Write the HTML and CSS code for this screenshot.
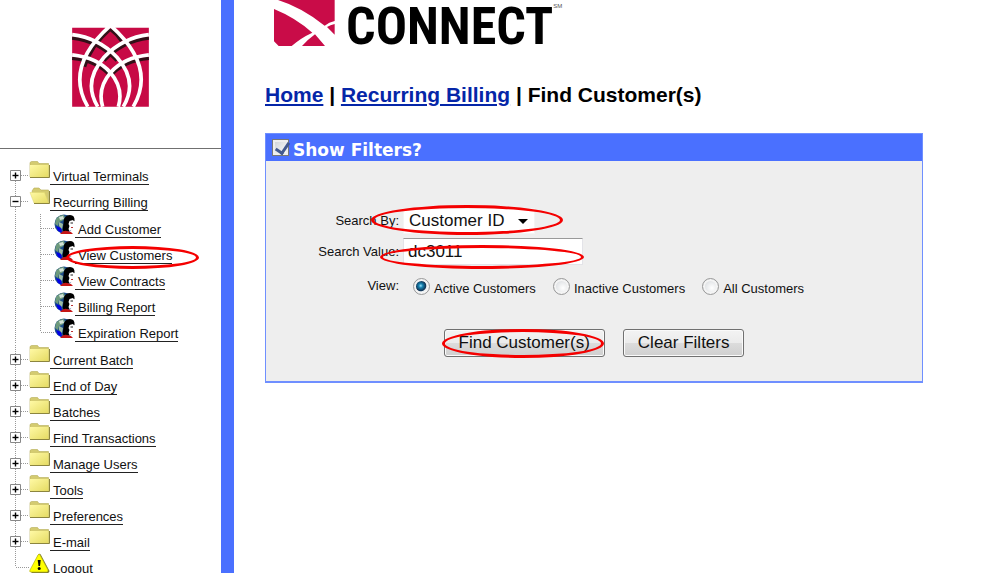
FILE: index.html
```
<!DOCTYPE html>
<html lang="en">
<head>
<meta charset="utf-8">
<title>Find Customer(s)</title>
<link rel="stylesheet" href="styles.css">
</head>
<body>
<svg class="defs" aria-hidden="true">
  <defs>
    <linearGradient id="paper" x2="1" y2="1"><stop offset="0" stop-color="#fff9a5"/><stop offset="1" stop-color="#e5db63"/></linearGradient>
    <symbol id="folder" viewBox="0 0 21 18">
      <path d="M1 4V1.5L2.5.5h6L10 2.5h9.5V16H1z" fill="#d4cb70" stroke="#b5ac55" stroke-width=".6"/>
      <path d="M1 4h18.5v12H1z" fill="url(#paper)"/>
      <path d="M1 16.500h19.500V4" fill="none" stroke="#8c853f"/>
    </symbol>
    <symbol id="folder-open" viewBox="0 0 21 18">
      <path d="M3 4l2-3h5l2 2h7.500v13H6z" fill="#d4cb70" stroke="#b5ac55" stroke-width=".6"/>
      <path d="M1 5.500h14.500L19.500 16H5z" fill="url(#paper)" stroke="#ded66f" stroke-width=".5"/>
      <path d="M5 16.500h15.500V4" fill="none" stroke="#8c853f"/>
    </symbol>
    <symbol id="person" viewBox="0 0 21 21">
      <circle cx="10" cy="10" r="9.500" fill="#1f4f8c"/>
      <path d="M2 5Q5 1 10 1l1 3-3 3-3 1-1 4-3-2z" fill="#6d9a7c"/>
      <path d="M5 3l4-1 1 3-4 1z" fill="#d4e3d8"/>
      <path d="M2 12l5 2 1 5-4-2z" fill="#0000e8"/>
      <path d="M5 8l4 2-1 5-3-3z" fill="#9dbba4"/>
      <path d="M10 5q2-4 6-4 5 0 4.500 6L16 9l-1 8-5 1q-2-2-1-5z" fill="#000"/>
      <path d="M15.500 7l3.500-1 1.500 2v5q-1 3-3 3l-2 1-1-2 1-3-1-2z" fill="#fff"/>
      <path d="M16.500 9h2.500" stroke="#222"/>
      <path d="M17 13.500h2" stroke="#b33"/>
      <path d="M6 20q3-4 7-3l4 1 2 2z" fill="#c51616"/>
    </symbol>
    <symbol id="warning" viewBox="0 0 21 21">
      <path d="M9.500 1Q11 0 12 2l8.500 16q0 2-2 2H3q-2-1-1-3z" fill="#77732c"/>
      <path d="M9 2q1-2 2 0l8 15q0 2-1 2H2q-2 0-1-2z" fill="#ffff00" stroke="#b6b319" stroke-width=".7"/>
      <path d="M8.700 7h3l-.7 6H9.500z" fill="#000"/><circle cx="10.200" cy="15.500" r="1.500"/>
    </symbol>
    <symbol id="box" viewBox="0 0 29 26">
      <path d="M15.500 0v26M21 14.500h8" stroke="#999" stroke-dasharray="1 1"/>
      <path d="M10.500 9.500h10v10h-10z" fill="#fff" stroke="#888"/>
      <path d="M12.500 14.500h6" stroke="#000" stroke-width="1.400"/>
    </symbol>
    <symbol id="plus" viewBox="0 0 29 26">
      <use href="#box"/><path d="M15.500 11.500v6" stroke="#000" stroke-width="1.400"/>
    </symbol>
    <symbol id="plus-first" viewBox="0 0 29 26">
      <use href="#plus"/><path d="M14 0h3v9h-3z" fill="#fff"/>
    </symbol>
    <symbol id="corner" viewBox="0 0 29 26">
      <path d="M15.500 0v14M16 14.500h13" stroke="#999" stroke-dasharray="1 1"/>
    </symbol>
    <symbol id="branch" viewBox="0 0 54 26">
      <path d="M15.500 0v26" stroke="#999" stroke-dasharray="1 1"/>
      <path d="M40.500 0v26M41 14.500h13" stroke="#999" stroke-dasharray="1 1"/>
    </symbol>
    <symbol id="branch-last" viewBox="0 0 54 26">
      <path d="M15.500 0v26" stroke="#999" stroke-dasharray="1 1"/>
      <path d="M40.500 0v14M41 14.500h13" stroke="#999" stroke-dasharray="1 1"/>
    </symbol>
    <g id="petals">
      <path d="M66 73Q145 82 201 141 266 215 220 290"/>
      <path d="M66 134Q142 142 181 187 222 235 205 290"/>
      <path d="M181 46Q42 170 113 290"/>
    </g>
  </defs>
</svg>
<div class="page">
  <aside class="sidebar">
    <div class="brand">
      <svg class="emblem" viewBox="66 38 231 253" role="img" aria-label="Emblem">
        <path d="M66 52h231v238H66z" fill="#c70a45"/>
        <g fill="none" stroke="#321018" stroke-width="11" transform="translate(0 10)"><path d="M66 73Q145 82 201 141M66 134Q142 142 181 187M297 73Q218 82 162 141M297 134Q221 142 181 187M181 46Q120 100 103 160M181 46Q200 60 215 82"/></g>
        <g fill="none" stroke="#fff" stroke-width="11"><use href="#petals"/><use href="#petals" transform="matrix(-1 0 0 1 363 0)"/></g>
        <path d="M165 52l16-14 16 14-8 5-8-8-8 8z" fill="#fff"/>
      </svg>
    </div>
    <nav class="tree">
      <div class="row"><button class="toggle" aria-label="Expand"><svg><use href="#plus-first"/></svg></button><svg class="folder"><use href="#folder"/></svg><a href="#">Virtual Terminals</a></div>
      <div class="row"><button class="toggle" aria-label="Collapse"><svg><use href="#box"/></svg></button><svg class="folder"><use href="#folder-open"/></svg><a href="#">Recurring Billing</a></div>
      <div class="subtree">
        <div class="row"><svg class="branch"><use href="#branch"/></svg><svg class="icon"><use href="#person"/></svg><a href="#">Add Customer</a></div>
        <div class="row"><svg class="branch"><use href="#branch"/></svg><svg class="icon"><use href="#person"/></svg><a href="#">View Customers</a><span class="mark mark-link"></span></div>
        <div class="row"><svg class="branch"><use href="#branch"/></svg><svg class="icon"><use href="#person"/></svg><a href="#">View Contracts</a></div>
        <div class="row"><svg class="branch"><use href="#branch"/></svg><svg class="icon"><use href="#person"/></svg><a href="#">Billing Report</a></div>
        <div class="row"><svg class="branch"><use href="#branch-last"/></svg><svg class="icon"><use href="#person"/></svg><a href="#">Expiration Report</a></div>
      </div>
      <div class="row"><button class="toggle" aria-label="Expand"><svg><use href="#plus"/></svg></button><svg class="folder"><use href="#folder"/></svg><a href="#">Current Batch</a></div>
      <div class="row"><button class="toggle" aria-label="Expand"><svg><use href="#plus"/></svg></button><svg class="folder"><use href="#folder"/></svg><a href="#">End of Day</a></div>
      <div class="row"><button class="toggle" aria-label="Expand"><svg><use href="#plus"/></svg></button><svg class="folder"><use href="#folder"/></svg><a href="#">Batches</a></div>
      <div class="row"><button class="toggle" aria-label="Expand"><svg><use href="#plus"/></svg></button><svg class="folder"><use href="#folder"/></svg><a href="#">Find Transactions</a></div>
      <div class="row"><button class="toggle" aria-label="Expand"><svg><use href="#plus"/></svg></button><svg class="folder"><use href="#folder"/></svg><a href="#">Manage Users</a></div>
      <div class="row"><button class="toggle" aria-label="Expand"><svg><use href="#plus"/></svg></button><svg class="folder"><use href="#folder"/></svg><a href="#">Tools</a></div>
      <div class="row"><button class="toggle" aria-label="Expand"><svg><use href="#plus"/></svg></button><svg class="folder"><use href="#folder"/></svg><a href="#">Preferences</a></div>
      <div class="row"><button class="toggle" aria-label="Expand"><svg><use href="#plus"/></svg></button><svg class="folder"><use href="#folder"/></svg><a href="#">E-mail</a></div>
      <div class="row"><svg class="corner"><use href="#corner"/></svg><svg class="icon"><use href="#warning"/></svg><a href="#">Logout</a></div>
    </nav>
  </aside>
  <main class="main">
    <div class="logo">
      <svg class="logo-mark" viewBox="42 0 183 141" aria-hidden="true">
        <g fill="#c90c48">
          <path d="M54 0H224V63Q207 67 194 77Q125 22 54 0z"/>
          <path d="M42 27Q106 53 157 98Q122 114 95 138H56L42 124z"/>
          <path d="M165 103L195 138H126Q143 119 165 103zM201 81Q211 75 224 72V104z"/>
        </g>
      </svg>
      <span class="logo-name">CONNECT</span><span class="logo-note">SM</span>
    </div>
    <h1><a href="#">Home</a> | <a href="#">Recurring Billing</a> | Find Customer(s)</h1>
    <form class="panel">
      <div class="panel-head"><input type="checkbox" id="filters" checked><label for="filters">Show Filters?</label></div>
      <div class="fields">
        <label for="by">Search By:</label>
        <div class="field">
          <select id="by"><option>Customer ID</option></select>
          <svg class="arrow" viewBox="0 0 10 5"><path d="M0 0h10L5 5z"/></svg>
          <span class="mark mark-select"></span>
        </div>
        <label for="value">Search Value:</label>
        <div class="field"><input class="text" type="text" id="value" value="dc3011"><span class="mark mark-input"></span></div>
        <span class="view">View:</span>
        <div class="radios">
          <input type="radio" name="view" id="active" checked><label for="active">Active Customers</label>
          <input type="radio" name="view" id="inactive"><label for="inactive">Inactive Customers</label>
          <input type="radio" name="view" id="all"><label for="all">All Customers</label>
        </div>
      </div>
      <div class="actions">
        <div class="field"><button class="button find" type="button">Find Customer(s)</button><span class="mark mark-button"></span></div>
        <button class="button" type="button">Clear Filters</button>
      </div>
    </form>
  </main>
</div>
</body>
</html>
```
FILE: styles.css
```
* { box-sizing: border-box; }
body {
  margin: 0;
  background: #fff;
  color: #111;
  font: 13px/16px "Liberation Sans", Arial, sans-serif;
}
.defs { position: absolute; width: 0; height: 0; }
.page { display: flex; height: 100vh; overflow: hidden; }
.sidebar {
  flex: none;
  width: 234px;
  border-right: 13px solid #4a70ff;
  overflow: hidden;
}
.brand {
  display: flex;
  justify-content: center;
  padding: 23px 0 41px;
  border-bottom: 1px solid #707070;
}
.emblem { width: 77px; height: 84px; }
.tree { padding-top: 12px; }
.row { position: relative; display: flex; height: 26px; }
.row > svg, .toggle { flex: none; }
.toggle { width: 29px; height: 26px; padding: 0; border: 0; background: none; }
.toggle svg { display: block; width: 29px; height: 26px; }
.row > .corner { width: 29px; height: 26px; }
.row > .branch { width: 54px; height: 26px; }
.row > .folder { width: 21px; height: 18px; }
.icon { width: 21px; height: 21px; }
.subtree { padding: 1px 0; }
.row a {
  align-self: flex-start;
  margin-top: 8px;
  padding-left: 3px;
  border-bottom: 1px solid #222;
  color: #111;
  line-height: 15px;
  text-decoration: none;
}

.mark {
  position: absolute;
  border: 3px solid #f40000;
  border-radius: 50%;
  pointer-events: none;
}
.mark-link { left: 66px; top: 6px; width: 133px; height: 23px; }
.mark-select { left: -32px; top: -3px; width: 192px; height: 30px; }
.mark-input { left: -23px; top: 7px; width: 204px; height: 24px; }
.mark-button { left: -2px; top: 0; width: 162px; height: 29px; }

.main { flex: 1; min-width: 0; padding: 0 63px 0 31px; }
.logo { display: flex; height: 47px; padding-left: 9px; }
.logo-mark { width: 61px; height: 47px; }
.logo-name {
  margin-left: 11px;
  color: #000;
  font: bold 52px/54px "Roboto Condensed", "Liberation Sans Narrow", "Liberation Sans", sans-serif;
}
.logo-note { color: #555; font-size: 6px; line-height: 12px; }
h1 { margin: 35px 0 26px; color: #000; font-size: 21px; line-height: 25px; }
h1 a { color: #0526a8; }

.panel { height: 250px; border: 1px solid #6f8fff; border-bottom-width: 2px; background: #eee; }
.panel-head {
  display: flex;
  align-items: center;
  height: 27px;
  padding-left: 6px;
  background: #4a70ff;
  color: #fff;
  font: bold 17px/26px Verdana, "DejaVu Sans", sans-serif;
}
.panel-head label { margin: 5px 0 0 4px; }
.panel-head input {
  appearance: none;
  width: 17px;
  height: 17px;
  margin: 0;
  border: 1px solid #777;
  background: linear-gradient(135deg, #ccd0d5, #fff);
  box-shadow: inset 0 0 0 2px #eee;
}
.panel-head input:checked::after {
  content: "";
  display: block;
  width: 6px;
  height: 11px;
  margin: 0 0 0 5px;
  border: solid #42598f;
  border-width: 0 3px 3px 0;
  transform: rotate(34deg);
}
.fields {
  display: grid;
  grid-template-columns: 133px 1fr;
  grid-template-rows: 26px 27px 34px;
  gap: 4px;
  padding-top: 47px;
  align-items: center;
}
.fields > label, .view { text-align: right; }
.field { position: relative; justify-self: start; display: flex; }
select {
  appearance: none;
  width: 132px;
  height: 26px;
  padding: 0 5px;
  border: 1px solid #f4f4f4;
  background: #fff;
  color: #111;
  font: 17px/24px "Liberation Sans", Arial, sans-serif;
}
.arrow { position: absolute; left: 115px; top: 11px; width: 10px; height: 5px; }
.text {
  width: 180px;
  height: 27px;
  padding: 0 4px;
  border: 1px solid #e3e3e8;
  border-top-color: #999;
  background: #fff;
  color: #111;
  font: 17px/24px "Liberation Sans", Arial, sans-serif;
}
.radios { display: flex; align-items: center; padding-left: 10px; }
.radios label { margin: 6px 17px 0 4px; }
.radios input {
  appearance: none;
  flex: none;
  width: 17px;
  height: 17px;
  margin: 0;
  border: 1px solid #999;
  border-radius: 50%;
  background: radial-gradient(circle at 60% 60%, #fff, #ccd0d4);
  box-shadow: inset 0 0 0 2px #f4f4f4;
}
.radios input:checked { background: radial-gradient(circle at 45% 45%, #9be2fa 0, #1682b0 2px, #123455 5px, #e8edf0 6px); }
.actions { display: flex; justify-content: center; gap: 18px; margin-top: 26px; }
.button {
  height: 28px;
  padding: 0 14px;
  border: 1px solid #707070;
  border-radius: 3px;
  background: linear-gradient(#f3f3f3 0, #ebebeb 50%, #dcdcdc 50%, #cfcfcf);
  box-shadow: inset 0 0 0 1px #fafafa;
  color: #111;
  font: 17px/24px "Liberation Sans", Arial, sans-serif;
}
```
